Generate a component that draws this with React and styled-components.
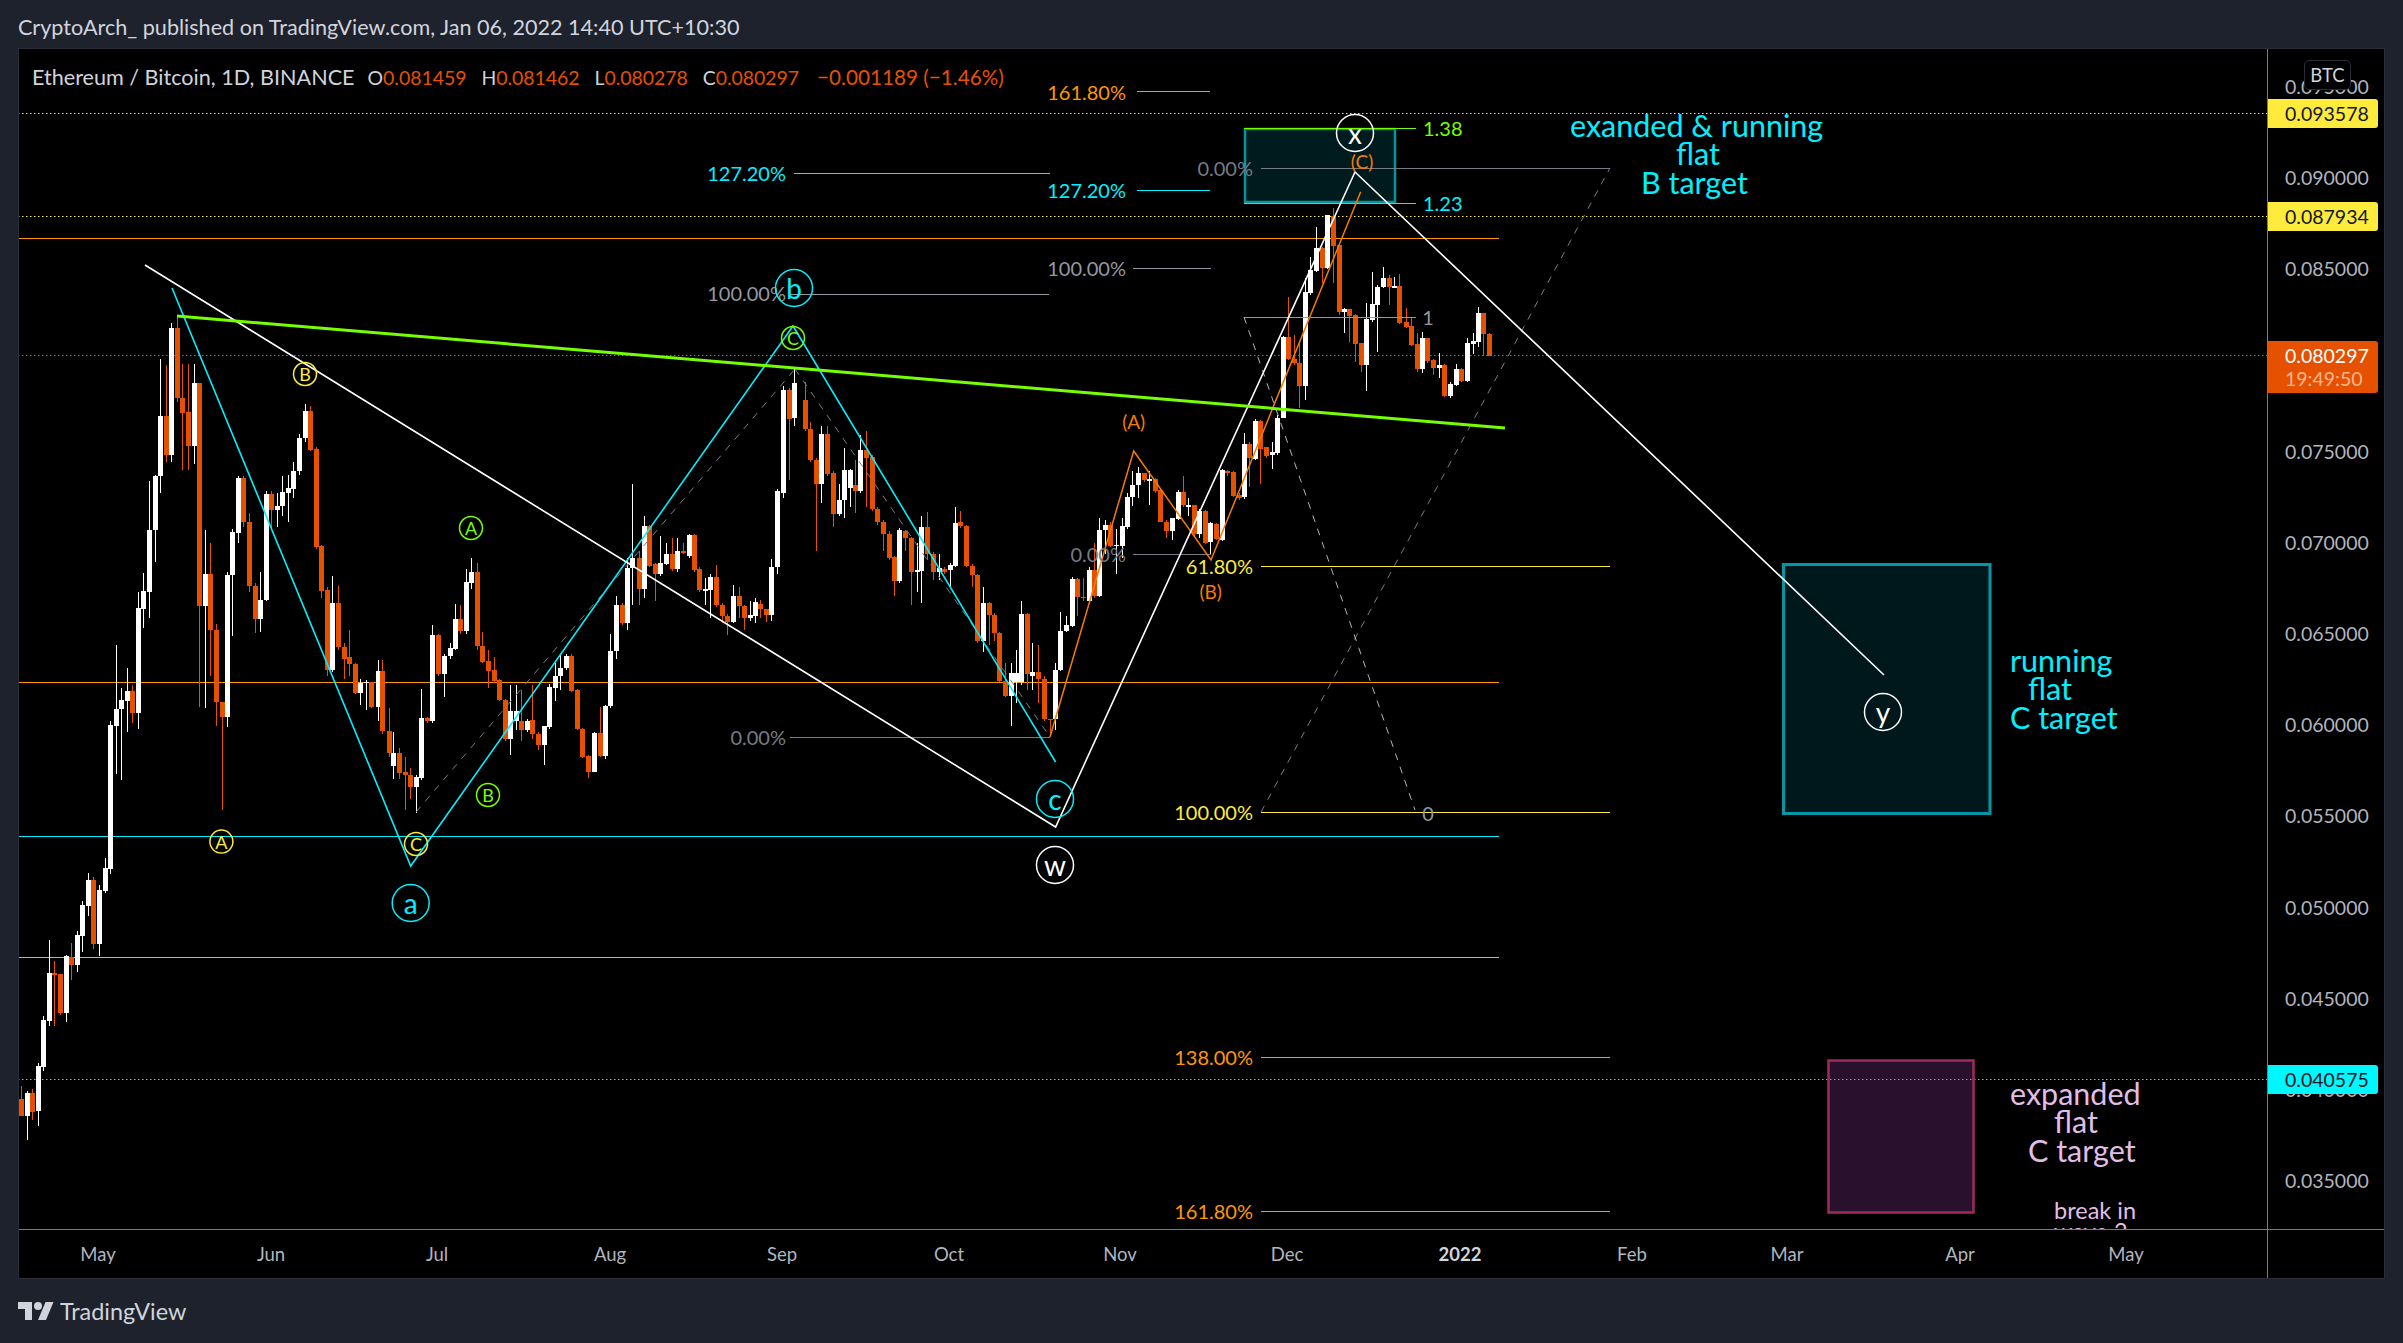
import React from 'react';
import styled, { createGlobalStyle } from 'styled-components';

const FONT = `"Lato", "Open Sans", "Liberation Sans", sans-serif`;

const Global = createGlobalStyle`
  html, body { margin: 0; padding: 0; background: #1e222d; }
  body { font-family: ${FONT}; }
`;

const Page = styled.div`
  width: 2403px;
  height: 1343px;
  background: #1e222d;
  display: flex;
  flex-direction: column;
  overflow: hidden;
`;
const Header = styled.div`
  height: 48px;
  box-sizing: border-box;
  padding: 6px 0 0 18px;
  display: flex;
  align-items: center;
  color: #d1d4dc;
  font-size: 21.6px;
  white-space: nowrap;
`;
const Frame = styled.div`
  margin: 0 18px;
  height: 1231px;
  box-sizing: border-box;
  border: 1px solid #2a2e39;
  background: #000;
  display: grid;
  grid-template-columns: 2248px 1fr;
  grid-template-rows: 1180px 1fr;
`;
const Pane = styled.div`
  position: relative;
  overflow: hidden;
`;
const Legend = styled.div`
  position: absolute;
  left: 13px;
  top: 15px;
  height: 26px;
  display: flex;
  align-items: center;
  color: #d1d4dc;
  font-size: 19.4px;
  white-space: nowrap;
`;
const Series = styled.span`
  margin-right: 13px;
  font-size: 21.6px;
`;
const Ohlc = styled.span`
  margin-right: 15px;
`;
const Val = styled.b`
  font-weight: 400;
  color: #e65100;
`;
const Change = styled(Val)`
  margin-left: 3px;
  font-size: 20.7px;
`;
const PriceAxis = styled.div`
  position: relative;
  border-left: 1px solid #787b86;
  overflow: hidden;
`;
const Tick = styled.div`
  position: absolute;
  left: 17px;
  top: ${p => p.$y}px;
  transform: translateY(-50%);
  color: #b2b5be;
  font-size: 19.5px;
  line-height: 1;
`;
const Tag = styled.div`
  position: absolute;
  left: 0;
  width: 110px;
  top: ${p => p.$y}px;
  height: ${p => p.$h}px;
  box-sizing: border-box;
  padding-left: 17px;
  background: ${p => p.$bg};
  color: ${p => p.$fg};
  border-radius: 0 3px 3px 0;
  font-size: 19.5px;
  display: flex;
  flex-direction: column;
  justify-content: center;
`;
const TagSub = styled.span`
  color: #ffb792;
  margin-top: 4px;
  line-height: 1;
`;
const TagMain = styled.span`
  line-height: 1;
`;
const Badge = styled.div`
  position: absolute;
  left: 36px;
  top: 11px;
  width: 47px;
  height: 30px;
  box-sizing: border-box;
  border: 1px solid #2a2e39;
  border-radius: 5px;
  background: #000;
  color: #d1d4dc;
  font-size: 18.5px;
  display: flex;
  align-items: center;
  justify-content: center;
`;
const TimeAxis = styled.div`
  position: relative;
  border-top: 1px solid #787b86;
`;
const Month = styled.span`
  position: absolute;
  top: 24px;
  left: ${p => p.$x}px;
  transform: translate(-50%, -50%);
  color: ${p => (p.$bold ? '#d1d4dc' : '#b2b5be')};
  font-size: 18.5px;
  font-weight: ${p => (p.$bold ? 700 : 400)};
`;
const Corner = styled.div`
  border-top: 1px solid #787b86;
  border-left: 1px solid #787b86;
`;
const Footer = styled.div`
  flex: 1;
  display: flex;
  align-items: center;
  gap: 6px;
  padding: 0 0 0 18px;
  color: #d1d4dc;
  font-size: 23.4px;
`;
const Label = styled.text`
  font-family: ${FONT};
  font-size: ${p => p.$s || 20}px;
  fill: ${p => p.$c || '#b2b5be'};
  dominant-baseline: central;
`;

/* candles read off the picture: x, colour, body top, body bottom, wick top, wick bottom */
const parse = (src, sx, sy, ox, oy) =>
  src.trim().split(/\s+/).map(s => {
    const [x, c, t, b, wt, wb] = s.split(',');
    return {
      x: Math.round((ox + x / sx) * 2) / 2, c,
      t: oy + t / sy, b: oy + b / sy, wt: oy + wt / sy, wb: oy + wb / sy,
    };
  });

const A = `34,o,1453,1501,1417,1501 52,w,1436,1501,1430,1568 67,o,1436,1490,1425,1512 85,w,1361,1487,1352,1529 100,w,1232,1364,1221,1375
118,w,1100,1235,1008,1249 133,o,1100,1106,1067,1249 151,o,1103,1212,1103,1218 169,w,1053,1212,1050,1238 184,o,1056,1078,1016,1120
202,w,994,1078,983,1098 217,w,910,997,899,1042 235,w,840,913,820,941 250,o,840,1019,832,1033 268,w,868,1019,854,1053 286,w,806,871,778,876
301,w,406,809,395,823 319,w,361,409,182,543 334,w,336,361,302,560 352,w,311,339,246,426 367,o,311,372,294,400 385,w,78,372,34,417 400,w,31,81,-20,134`;
const B = `293,w,672,810,563,870 304,w,552,673,548,743 315,w,417,552,290,588 326,o,417,503,303,520 336,w,220,503,208,520 347,o,220,376,190,385
358,o,376,410,300,537 369,o,408,483,300,537 380,w,343,483,300,525 390,o,343,843,343,1068 402,w,771,842,672,1070 413,o,771,895,700,1000 424,o,895,1058,883,1110
435,o,1058,1090,1060,1300 445,w,772,1090,765,1113 456,w,677,772,670,910 467,w,556,679,552,700 477,o,556,653,552,665 488,o,653,797,635,810 500,o,797,871,790,903
511,w,828,871,765,900 521,w,592,828,585,832 532,o,592,628,585,670 544,w,618,628,590,665 554,w,586,618,550,640 565,w,578,590,548,655 575,w,539,580,520,600
587,w,466,540,458,548 598,w,405,467,390,475 608,o,405,492,395,495 620,o,491,710,485,715 630,o,708,808,705,825 642,o,806,985,800,1000 652,w,836,985,775,990
663,o,836,933,798,940 674,o,933,960,925,1005 685,o,957,973,897,1000 696,o,973,1038,970,1040 707,w,1015,1038,1005,1065 718,w,1012,1015,1008,1075 728,o,1013,1068,1013,1070
741,w,987,1068,963,1100 750,o,987,1123,963,1130 762,o,1122,1172,1070,1180 771,w,1172,1200,1125,1230 783,o,1172,1216,1160,1230 794,o,1215,1220,1180,1300
805,o,1220,1248,1205,1275 816,w,1226,1248,1220,1305 826,w,1092,1228,1028,1232 838,o,1094,1100,1090,1105 848,w,907,1100,885,1105 859,o,907,995,905,1000
871,w,955,995,950,1045 882,w,937,955,925,960 892,w,871,938,838,940 903,o,871,898,840,905 914,w,788,898,760,905 924,w,767,790,735,805 935,o,767,932,747,940
946,o,931,967,900,970 957,o,965,988,940,1025 968,o,986,1010,957,1015 979,o,1008,1052,1005,1055 990,o,1052,1140,1050,1145 1000,w,1077,1140,1020,1175
1012,w,1077,1100,1020,1120 1022,o,1100,1120,1030,1145 1033,w,1100,1120,1095,1125 1044,o,1098,1130,1020,1140 1055,o,1130,1153,1125,1165 1066,w,1112,1154,1110,1198
1077,w,1024,1113,1018,1118 1088,w,1000,1025,970,1055 1099,w,980,1000,950,1030 1110,w,954,980,950,985 1120,o,954,1032,950,1035 1132,o,1030,1117,1028,1120
1142,o,1117,1180,1115,1182 1153,o,1178,1213,1175,1228 1165,w,1127,1213,1125,1215 1176,o,1127,1178,1068,1180 1187,w,1066,1178,1064,1185 1197,w,942,1067,905,1070
1208,w,840,943,820,962 1219,o,840,880,835,885 1230,w,757,880,735,895 1240,w,735,758,570,840 1252,o,735,805,720,840 1263,w,663,805,640,825 1273,o,663,753,660,755
1284,o,749,770,745,830 1295,w,746,770,685,775 1306,w,725,748,700,750 1317,o,725,760,690,763 1328,w,720,760,690,765 1339,o,720,724,700,725 1350,w,683,730,680,735
1361,o,683,762,680,765 1371,o,760,806,755,810 1382,w,804,808,780,840 1393,w,777,806,770,870 1404,o,777,840,750,845 1415,o,840,865,835,880 1426,o,865,877,860,908
1438,w,820,877,795,880 1448,o,820,842,800,870 1459,o,842,868,840,895 1470,w,862,870,830,875 1481,w,834,864,825,880 1491,o,838,850,828,870 1502,o,850,862,848,878
1512,w,755,862,738,875 1524,w,585,755,580,770 1536,w,358,588,350,600 1546,o,358,423,355,560 1557,w,343,420,312,438`;
const C = `10,o,380,445,340,450 20,o,445,516,430,520 31,o,516,568,510,720 42,w,457,568,440,612 53,o,457,547,440,552 66,o,545,637,540,665 76,w,605,637,570,640
87,w,538,605,488,645 98,w,538,577,535,620 108,o,572,585,515,635 119,w,493,585,460,590 130,o,493,510,450,620 141,o,508,625,505,630 152,o,625,655,620,660 163,o,655,680,650,720
174,o,680,735,675,740 185,o,733,787,730,820 195,w,673,787,668,790 207,o,675,690,673,720 218,o,690,767,688,840 229,w,762,767,700,810 238,w,665,763,640,835 249,o,665,725,632,740
261,o,725,767,722,785 272,w,757,767,725,785 283,o,760,767,755,770 294,w,750,762,745,800 304,w,656,752,620,755 315,o,655,664,630,668 326,o,662,752,660,755 337,o,752,772,748,800
348,o,772,920,770,925 360,w,835,920,800,945 370,o,835,863,833,930 381,o,862,903,858,920 391,o,903,1010,900,1012 403,o,1010,1043,970,1045 414,w,993,1043,970,1110 424,w,993,1013,940,1060
433,w,860,1013,830,1020 445,o,860,995,858,1030 456,w,990,1000,925,1030 467,o,990,1005,930,1060 479,o,1005,1095,1000,1100 490,o,1095,1098,1095,1130 501,w,985,1095,970,1120
511,w,898,985,855,988 522,w,885,898,865,900 534,w,782,888,778,890 544,o,782,822,780,865 555,o,822,825,780,830 566,w,762,830,755,832 577,o,762,820,700,825 586,w,672,820,645,822
598,w,660,672,650,725 608,o,660,708,655,710 620,w,705,708,670,770 631,w,663,708,645,735 642,w,597,665,590,670 652,w,572,598,540,618 663,w,545,572,530,600 674,o,545,560,545,565
685,w,558,562,540,617 696,o,558,585,555,590 707,o,583,653,580,655 718,o,653,675,650,690 729,w,645,675,645,695 741,w,586,647,583,650 751,o,586,617,550,620 761,w,617,620,600,640
772,o,617,680,615,685 783,w,630,680,625,690 794,o,630,700,628,703 805,w,656,698,655,725 816,o,658,692,656,695 827,w,538,695,535,697 838,o,540,545,538,550 850,o,542,595,540,598
860,o,593,600,590,605 871,w,480,597,455,602 881,o,480,510,475,575 892,w,427,512,423,515 903,o,427,490,425,570 914,o,487,507,485,510 925,w,498,503,475,535 936,w,420,500,415,505 947,w,240,420,238,422`;
const D = `310,o,771,836,650,840 323,o,836,850,765,855 335,o,850,917,790,985 348,w,636,917,595,960 360,w,570,640,530,645 373,w,504,572,442,575 386,o,504,565,500,610 398,w,406,565,404,568
411,o,408,497,385,610 423,o,495,695,492,705 436,w,687,695,685,758 447,o,688,707,686,785 460,o,705,792,703,845 473,o,790,855,788,875 485,w,717,855,668,933 498,w,672,719,575,725
510,w,620,674,615,815 523,w,594,622,562,625 535,o,594,622,585,675 548,w,618,622,590,625 558,o,618,730,582,733 573,o,727,740,685,745 585,o,738,795,712,798 598,o,793,866,760,875
610,w,775,866,757,880 622,o,775,843,773,848 635,o,840,863,838,885 647,w,855,863,818,895 660,o,855,947,853,950 672,w,912,947,905,953 685,w,867,914,852,917 697,o,867,903,865,905
710,w,790,903,775,905 723,w,783,792,760,822 735,w,700,786,682,800 747,o,700,762,698,827 759,o,762,827,760,827`;

const candles = [
  ...parse(A, 3, 2.8, 10, 580),
  ...parse(B, 1.96, 2.24, 0, 230),
  ...parse(C, 1.96, 2.24, 800, 230),
  ...parse(D, 2.24, 3, 1150, 80),
];

const WHITE = '#ffffff', ORANGE = '#e65100', CYAN = '#00f0ff';
const ticks = ['0.095000','0.090000','0.085000','0.080000','0.075000','0.070000','0.065000','0.060000','0.055000','0.050000','0.045000','0.040000','0.035000'];
const months = [['May',98],['Jun',271],['Jul',437],['Aug',610],['Sep',782],['Oct',949],['Nov',1120],['Dec',1287],['2022',1460,true],['Feb',1632],['Mar',1787],['Apr',1960],['May',2126]];

const hLines = [
  [18, 1499, 238.5, '#ff9800'], [18, 1499, 682.5, '#ff9800'], [18, 1499, 836.5, CYAN], [18, 1499, 957.5, '#b2b5be'],
  [1137, 1210, 91.5, '#ff9800'], [1137, 1210, 190.5, CYAN], [1133, 1211, 268.5, '#9598a1'], [1133, 1211, 554.5, '#787b86'],
  [794, 1050, 173.5, CYAN], [790, 1049, 294.5, '#9598a1'], [790, 1050, 737.5, '#787b86'],
  [1261, 1610, 168.5, '#787b86'], [1261, 1610, 566.5, '#ffeb3b'], [1261, 1610, 812.5, '#ffeb3b'],
  [1261, 1610, 1057.5, '#ff9800'], [1261, 1610, 1211.5, '#ff9800'],
  [1244, 1416, 128.5, '#76ff03'], [1244, 1416, 203.5, CYAN], [1244, 1416, 317.5, '#9598a1'],
];
const dotted = [[113.5, '#ffeb3b'], [216.5, '#ffeb3b'], [355.5, ORANGE], [1079.5, CYAN]];
const smallCircles = [
  [221.4, 841.6, 'A', '#ffeb3b'], [305, 374, 'B', '#ffeb3b'], [416, 844, 'C', '#ffeb3b'],
  [471, 528, 'A', '#76ff03'], [488, 795, 'B', '#76ff03'], [793, 338, 'C', '#76ff03'],
];
const bigCircles = [
  [410.7, 903, 'a', CYAN], [794, 288, 'b', CYAN], [1055, 799, 'c', CYAN],
  [1055, 865, 'w', '#ffffff'], [1355, 133, 'x', '#ffffff'], [1883, 712, 'y', '#ffffff'],
];
const fibLabels = [
  [1126, 92, '161.80%', '#ff9800'], [786, 173, '127.20%', CYAN], [1126, 190, '127.20%', CYAN],
  [786, 293, '100.00%', '#9598a1'], [1126, 268, '100.00%', '#9598a1'], [786, 737, '0.00%', '#787b86'],
  [1126, 554, '0.00%', '#787b86'], [1253, 168, '0.00%', '#787b86'], [1253, 566, '61.80%', '#ffeb3b'],
  [1253, 812, '100.00%', '#ffeb3b'], [1253, 1057, '138.00%', '#ff9800'], [1253, 1211, '161.80%', '#ff9800'],
];
const notes = [
  ['exanded & running', 1570, 125, CYAN], ['flat', 1676, 153, CYAN], ['B target', 1641, 182, CYAN],
  ['running', 2010, 660, CYAN], ['flat', 2028, 688, CYAN], ['C target', 2010, 717, CYAN],
  ['expanded', 2010, 1093, '#e1bee7'], ['flat', 2054, 1121, '#e1bee7'], ['C target', 2028, 1150, '#e1bee7'],
];

const Chart = () => (
  <svg width="2248" height="1180" viewBox="19 49 2248 1180" style={{ display: 'block' }}>
    {hLines.slice(0, 4).map(([a, b, y, c], i) => <line key={i} x1={a} x2={b} y1={y} y2={y} stroke={c} strokeWidth="1" />)}
    {dotted.map(([y, c]) => <line key={y} x1="18" x2="2268" y1={y} y2={y} stroke={c} strokeWidth="1" strokeDasharray="1.5 2.5" />)}
    {candles.map((k, i) => {
      const col = k.c === 'w' ? WHITE : ORANGE;
      return (
        <g key={i} shapeRendering="crispEdges">
          <line x1={k.x} x2={k.x} y1={k.wt} y2={k.wb} stroke={col} strokeWidth="1" />
          <rect x={k.x - 2.5} y={k.t} width="5" height={Math.max(k.b - k.t, 1.5)} fill={col} />
        </g>
      );
    })}
    <rect x="1245" y="129" width="150" height="73" fill="rgba(0,188,212,0.14)" stroke="#00979f" strokeWidth="2.5" />
    <rect x="1783.5" y="564.5" width="206.5" height="249" fill="rgba(0,188,212,0.13)" stroke="#0097a7" strokeWidth="3" />
    <rect x="1828.5" y="1060.5" width="145" height="152" fill="rgba(171,71,188,0.24)" stroke="#a12a5c" strokeWidth="2.5" />
    {hLines.slice(4).map(([a, b, y, c], i) => <line key={i} x1={a} x2={b} y1={y} y2={y} stroke={c} strokeWidth="1" />)}
    {[[416, 812, 795, 369], [795, 369, 1050, 737]].map(([a, b, c, d], i) => (
      <line key={i} x1={a} y1={b} x2={c} y2={d} stroke="#787b86" strokeWidth="1" strokeDasharray="7 7" />
    ))}
    <line x1="1261" y1="812" x2="1610" y2="168" stroke="#787b86" strokeWidth="1" strokeDasharray="7 7" />
    <line x1="1244" y1="317" x2="1415" y2="810" stroke="#b2b5be" strokeWidth="1" strokeDasharray="7 7" />
    <polyline points="172,288 410.7,866 793,326 1055.6,762" fill="none" stroke={CYAN} strokeWidth="1.6" />
    <polyline points="1050,737 1133.7,451 1211,560 1360.7,191.7" fill="none" stroke="#f57c00" strokeWidth="1.5" />
    <polyline points="145,265 1055.6,827 1355,172 1884,675" fill="none" stroke="#ffffff" strokeWidth="1.6" />
    <line x1="177" y1="316" x2="1505" y2="428" stroke="#76ff03" strokeWidth="3" />
    {fibLabels.map(([x, y, t, c], i) => <Label key={i} x={x} y={y} $c={c} textAnchor="end">{t}</Label>)}
    <Label x="1423" y="128" $c="#76ff03">1.38</Label>
    <Label x="1423" y="203" $c={CYAN}>1.23</Label>
    <Label x="1428" y="317" $c="#9598a1" textAnchor="middle">1</Label>
    <Label x="1428" y="813" $c="#9598a1" textAnchor="middle">0</Label>
    <Label x="1133.7" y="421" $c="#f57c00" $s={19} textAnchor="middle">(A)</Label>
    <Label x="1210.7" y="591" $c="#f57c00" $s={19} textAnchor="middle">(B)</Label>
    <Label x="1362" y="161" $c="#f57c00" $s={19} textAnchor="middle">(C)</Label>
    {smallCircles.map(([x, y, t, c], i) => (
      <g key={i}>
        <circle cx={x} cy={y} r="11.5" fill="none" stroke={c} strokeWidth="1.5" />
        <Label x={x} y={y} $c={c} $s={18} textAnchor="middle">{t}</Label>
      </g>
    ))}
    {bigCircles.map(([x, y, t, c], i) => (
      <g key={i}>
        <circle cx={x} cy={y} r="18.5" fill="none" stroke={c} strokeWidth="1.5" />
        <Label x={x} y={y} $c={c} $s={28} textAnchor="middle">{t}</Label>
      </g>
    ))}
    {notes.map(([t, x, y, c], i) => <Label key={i} x={x} y={y} $c={c} $s={30.5}>{t}</Label>)}
    <Label x="2054" y="1210" $c="#e1bee7" $s={23.5}>break in</Label>
    <Label x="2054" y="1231" $c="#e1bee7" $s={23.5}>wave 2</Label>
  </svg>
);

const Logo = () => (
  <svg width="36" height="20" viewBox="0 3 36 20" fill="#d1d4dc">
    <path d="M14 22H7V11H0V4h14v18zM28 22h-8l7.5-18h8L28 22z" />
    <circle cx="20" cy="8" r="4" />
  </svg>
);

export default function App() {
  return (
    <Page>
      <Global />
      <Header>CryptoArch_ published on TradingView.com, Jan 06, 2022 14:40 UTC+10:30</Header>
      <Frame>
        <Pane>
          <Chart />
          <Legend>
            <Series>Ethereum / Bitcoin, 1D, BINANCE</Series>
            <Ohlc>O<Val>0.081459</Val></Ohlc>
            <Ohlc>H<Val>0.081462</Val></Ohlc>
            <Ohlc>L<Val>0.080278</Val></Ohlc>
            <Ohlc>C<Val>0.080297</Val></Ohlc>
            <Change>−0.001189 (−1.46%)</Change>
          </Legend>
        </Pane>
        <PriceAxis>
          {ticks.map((t, i) => <Tick key={t} $y={38 + i * 91.17}>{t}</Tick>)}
          <Badge>BTC</Badge>
          <Tag $y={50} $h={29} $bg="#ffeb3b" $fg="#131722">0.093578</Tag>
          <Tag $y={153} $h={29} $bg="#ffeb3b" $fg="#131722">0.087934</Tag>
          <Tag $y={292} $h={52} $bg="#e65100" $fg="#ffffff">
            <TagMain>0.080297</TagMain>
            <TagSub>19:49:50</TagSub>
          </Tag>
          <Tag $y={1016} $h={29} $bg="#00f7ff" $fg="#131722">0.040575</Tag>
        </PriceAxis>
        <TimeAxis>
          {months.map(([m, x, b]) => <Month key={m + x} $x={x - 19} $bold={b}>{m}</Month>)}
        </TimeAxis>
        <Corner />
      </Frame>
      <Footer><Logo />TradingView</Footer>
    </Page>
  );
}
